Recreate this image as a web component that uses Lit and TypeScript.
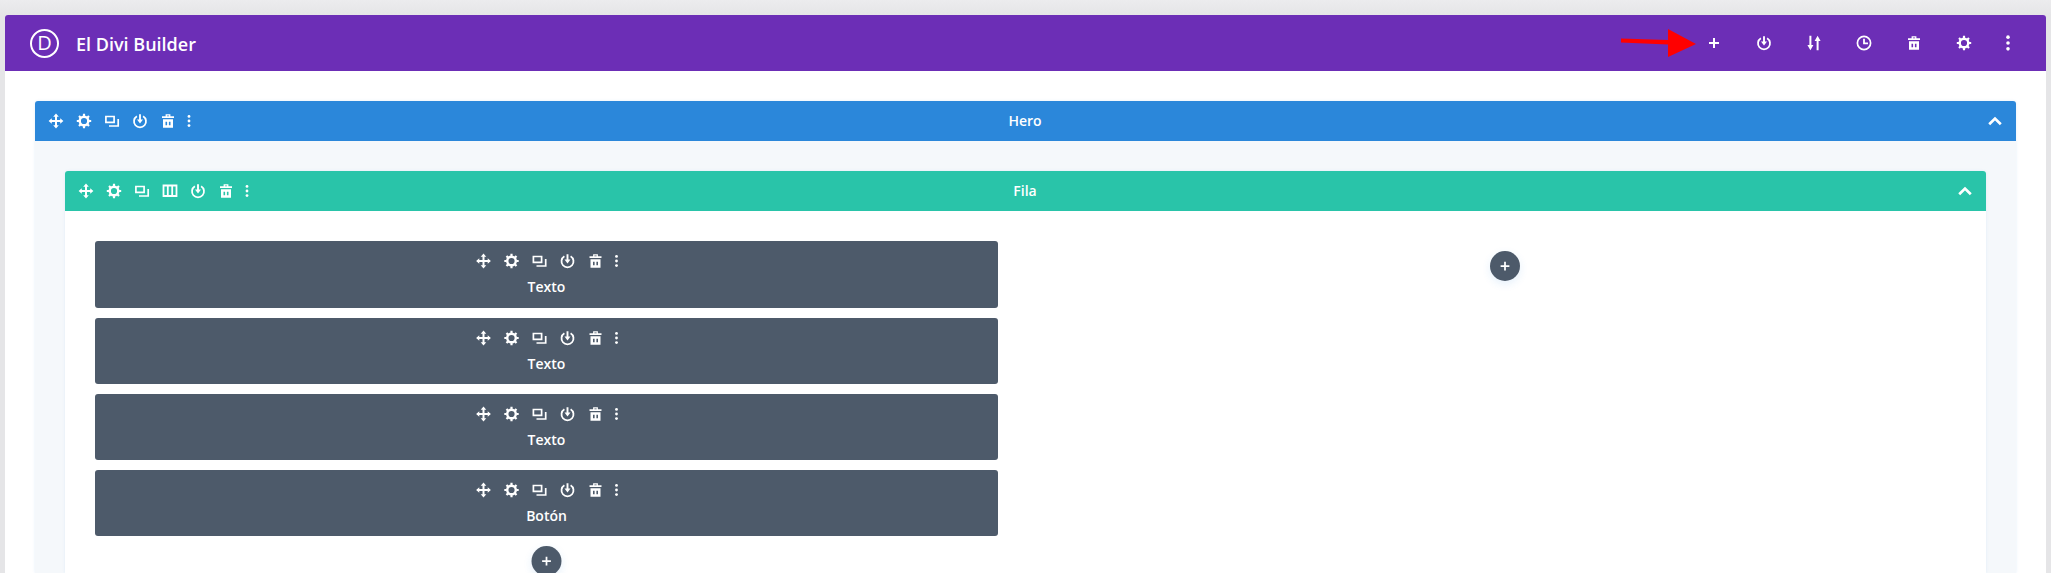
import { LitElement, html, css, svg } from "lit";
import { customElement } from "lit/decorators.js";

const glyphs: Record<string, unknown> = {
  move: svg`<path d="M8 3v10M3 8h10" fill="none" stroke="#fff" stroke-width="2"/><path d="M8 .6 10.8 3.8H5.2ZM8 15.4 5.2 12.2H10.8ZM.6 8 3.8 5.2V10.8ZM15.4 8 12.2 10.8V5.2Z" fill="#fff"/>`,
  gear: svg`<circle cx="8" cy="8" r="4.3" fill="none" stroke="#fff" stroke-width="2.4"/><path d="M8 .8v2.4M8 12.8v2.4M.8 8h2.4M12.8 8h2.4M3 3l1.7 1.7M11.3 11.3 13 13M13 3l-1.7 1.7M4.7 11.3 3 13" stroke="#fff" stroke-width="2.2"/>`,
  copy: svg`<path d="M1.9 3.5h8.2v5.9H1.9Z" fill="none" stroke="#fff" stroke-width="1.7"/><path d="M14.2 6v7H5" fill="none" stroke="#fff" stroke-width="1.7"/>`,
  cols: svg`<path d="M1.5 2.5h13v10.5h-13ZM5.8 2.5v10.5M10.2 2.5v10.5" fill="none" stroke="#fff" stroke-width="1.8"/>`,
  power: svg`<path d="M4.9 3.2a6 6 0 1 0 6.2 0" fill="none" stroke="#fff" stroke-width="1.8"/><path d="M8 1.2v6" stroke="#fff" stroke-width="1.9"/><path d="M5 6.4h6L8 10.6Z" fill="#fff"/>`,
  trash: svg`<path fill-rule="evenodd" d="M2 3.2h3.6V1.2h4.8v2H14v1.9H2ZM6.9 2.5v.7h2.2v-.7ZM3 6.2h10V14.8H3ZM5.5 8.8v3.4h1.6V8.8ZM8.9 8.8v3.4h1.6V8.8Z" fill="#fff"/>`,
  dots: svg`<circle cx="8" cy="2.8" r="1.6" fill="#fff"/><circle cx="8" cy="8" r="1.6" fill="#fff"/><circle cx="8" cy="13.2" r="1.6" fill="#fff"/>`,
  plus: svg`<path d="M8 3v10M3 8h10" stroke="#fff" stroke-width="2"/>`,
  sort: svg`<path d="M4.4 .8v10M11.6 15.2v-10" stroke="#fff" stroke-width="2"/><path d="M1.4 10h6L4.4 15.2ZM8.6 6h6L11.6.8Z" fill="#fff"/>`,
  clock: svg`<circle cx="8" cy="8" r="6.6" fill="none" stroke="#fff" stroke-width="1.7"/><path d="M8 3.8V8.4h4" fill="none" stroke="#fff" stroke-width="1.8"/>`,
  chevron: svg`<path d="M2.2 11.2 8 5.6 13.8 11.2" fill="none" stroke="#fff" stroke-width="2.7"/>`,
};

const icon = (name: string) =>
  html`<svg class="ic" viewBox="0 0 16 16" width="16" height="16" aria-hidden="true">${glyphs[name]}</svg>`;

const tools = (names: string[]) =>
  html`<div class="tools">${names.map((n) => html`<span class=${n === "dots" ? "slot narrow" : "slot"}>${icon(n)}</span>`)}</div>`;

const addBtn = () => html`<span class="add">${icon("plus")}</span>`;

const moduleTools = ["move", "gear", "copy", "power", "trash", "dots"];
const rowTools = ["move", "gear", "copy", "cols", "power", "trash", "dots"];
const topTools = ["plus", "power", "sort", "clock", "trash", "gear"];

@customElement("app-root")
export class AppRoot extends LitElement {
  static styles = css`
    :host {
      display: block;
      height: 573px;
      overflow: hidden;
      background: linear-gradient(#ececee 0, #e5e5e7 15px);
      padding: 15px 5px 0;
      box-sizing: border-box;
      font-family: "Open Sans", "Liberation Sans", sans-serif;
      color: #fff;
    }
    .ic { display: block; }
    .window {
      height: 558px;
      background: #fff;
      border-radius: 3px 3px 0 0;
      overflow: hidden;
    }
    .top {
      height: 56px;
      background: #6c2eb6;
      display: flex;
      align-items: center;
      padding: 0 31px 0 25px;
      position: relative;
    }
    .logo {
      width: 25px;
      height: 25px;
      border: 2px solid #fff;
      border-radius: 50%;
      display: flex;
      align-items: center;
      justify-content: center;
      font-size: 20px;
      font-weight: 400;
      line-height: 1;
    }
    .brand {
      margin-left: 17px;
      padding-top: 1px;
      font-size: 18px;
      font-weight: 600;
      flex: 1;
    }
    .top-tools {
      display: flex;
      align-items: center;
    }
    .top-slot {
      width: 50px;
      display: flex;
      justify-content: center;
    }
    .top-dots {
      width: 16px;
      margin-left: 11px;
      margin-right: -1px;
    }
    .top-dots .ic { width: 18px; height: 18px; flex: none; }
    .arrow {
      position: absolute;
      left: 1616px;
      top: 14px;
    }
    .content { padding: 30px 30px 0; }
    .section {
      background: #f5f8fb;
      height: 472px;
      box-shadow: 0 0 3px rgba(43, 135, 218, 0.12);
      border-radius: 3px 3px 0 0;
    }
    .bar {
      height: 40px;
      display: grid;
      grid-template-columns: 1fr auto 1fr;
      align-items: center;
      font-size: 14px;
      font-weight: 600;
      line-height: 18px;
      border-radius: 3px 3px 0 0;
      padding: 0 13px 0 12px;
    }
    .bar > span:not(.chev) { margin-top: -1px; }
    .bar .tools { margin-left: -5px; }
    .bar.blue { background: #2b87da; }
    .bar.green { background: #29c4a9; }
    .chev { justify-self: end; }
    .section-body { padding: 30px 30px 0; }
    .row {
      background: #fff;
      height: 402px;
      box-shadow: 0 0 3px rgba(43, 135, 218, 0.1);
      border-radius: 3px 3px 0 0;
    }
    .row-body {
      display: grid;
      grid-template-columns: 903px 902px;
      justify-content: space-between;
      padding: 30px 30px 0;
    }
    .col {
      display: flex;
      flex-direction: column;
      gap: 10px;
    }
    .col.right { align-items: center; padding-top: 10px; }
    .module {
      background: #4d5a6a;
      border-radius: 3px;
      height: 66px;
      display: flex;
      flex-direction: column;
      align-items: center;
      padding-top: 12px;
      box-sizing: border-box;
      font-size: 14px;
      font-weight: 600;
      line-height: 20px;
    }
    .module.first { height: 67px; }
    .module .tools { margin-bottom: 8px; transform: translateX(-0.5px); }
    .tools { display: flex; align-items: center; height: 16px; }
    .slot {
      width: 28px;
      display: flex;
      justify-content: center;
    }
    .slot.narrow { width: 14px; }
    .add {
      width: 30px;
      height: 30px;
      border-radius: 50%;
      background: #4d5a6a;
      display: flex;
      align-items: center;
      justify-content: center;
      box-shadow: 0 3px 8px rgba(43, 135, 218, 0.12);
    }
    .add .ic { width: 14px; height: 14px; }
    .add-under { align-self: center; transform: translateX(-0.5px); }
  `;

  private renderModule(label: string, first = false) {
    return html`<div class=${first ? "module first" : "module"}>${tools(moduleTools)}<span>${label}</span></div>`;
  }

  render() {
    return html`
      <div class="window">
        <div class="top">
          <span class="logo">D</span>
          <span class="brand">El Divi Builder</span>
          <div class="top-tools">
            ${topTools.map((n) => html`<span class="top-slot">${icon(n)}</span>`)}
            <span class="top-slot top-dots">${icon("dots")}</span>
          </div>
          <svg class="arrow" width="80" height="32" viewBox="0 0 80 32" aria-hidden="true">
            <path d="M0 9.5 47 11V0L75 15 47 28V15.5L0 13.5Z" fill="#f00"/>
          </svg>
        </div>
        <div class="content">
          <div class="section">
            <div class="bar blue">
              ${tools(["move", "gear", "copy", "power", "trash", "dots"])}
              <span>Hero</span>
              <span class="chev">${icon("chevron")}</span>
            </div>
            <div class="section-body">
              <div class="row">
                <div class="bar green">
                  ${tools(rowTools)}
                  <span>Fila</span>
                  <span class="chev">${icon("chevron")}</span>
                </div>
                <div class="row-body">
                  <div class="col">
                    ${this.renderModule("Texto", true)}
                    ${this.renderModule("Texto")}
                    ${this.renderModule("Texto")}
                    ${this.renderModule("Botón")}
                    <span class="add-under">${addBtn()}</span>
                  </div>
                  <div class="col right">${addBtn()}</div>
                </div>
              </div>
            </div>
          </div>
        </div>
      </div>
    `;
  }
}
